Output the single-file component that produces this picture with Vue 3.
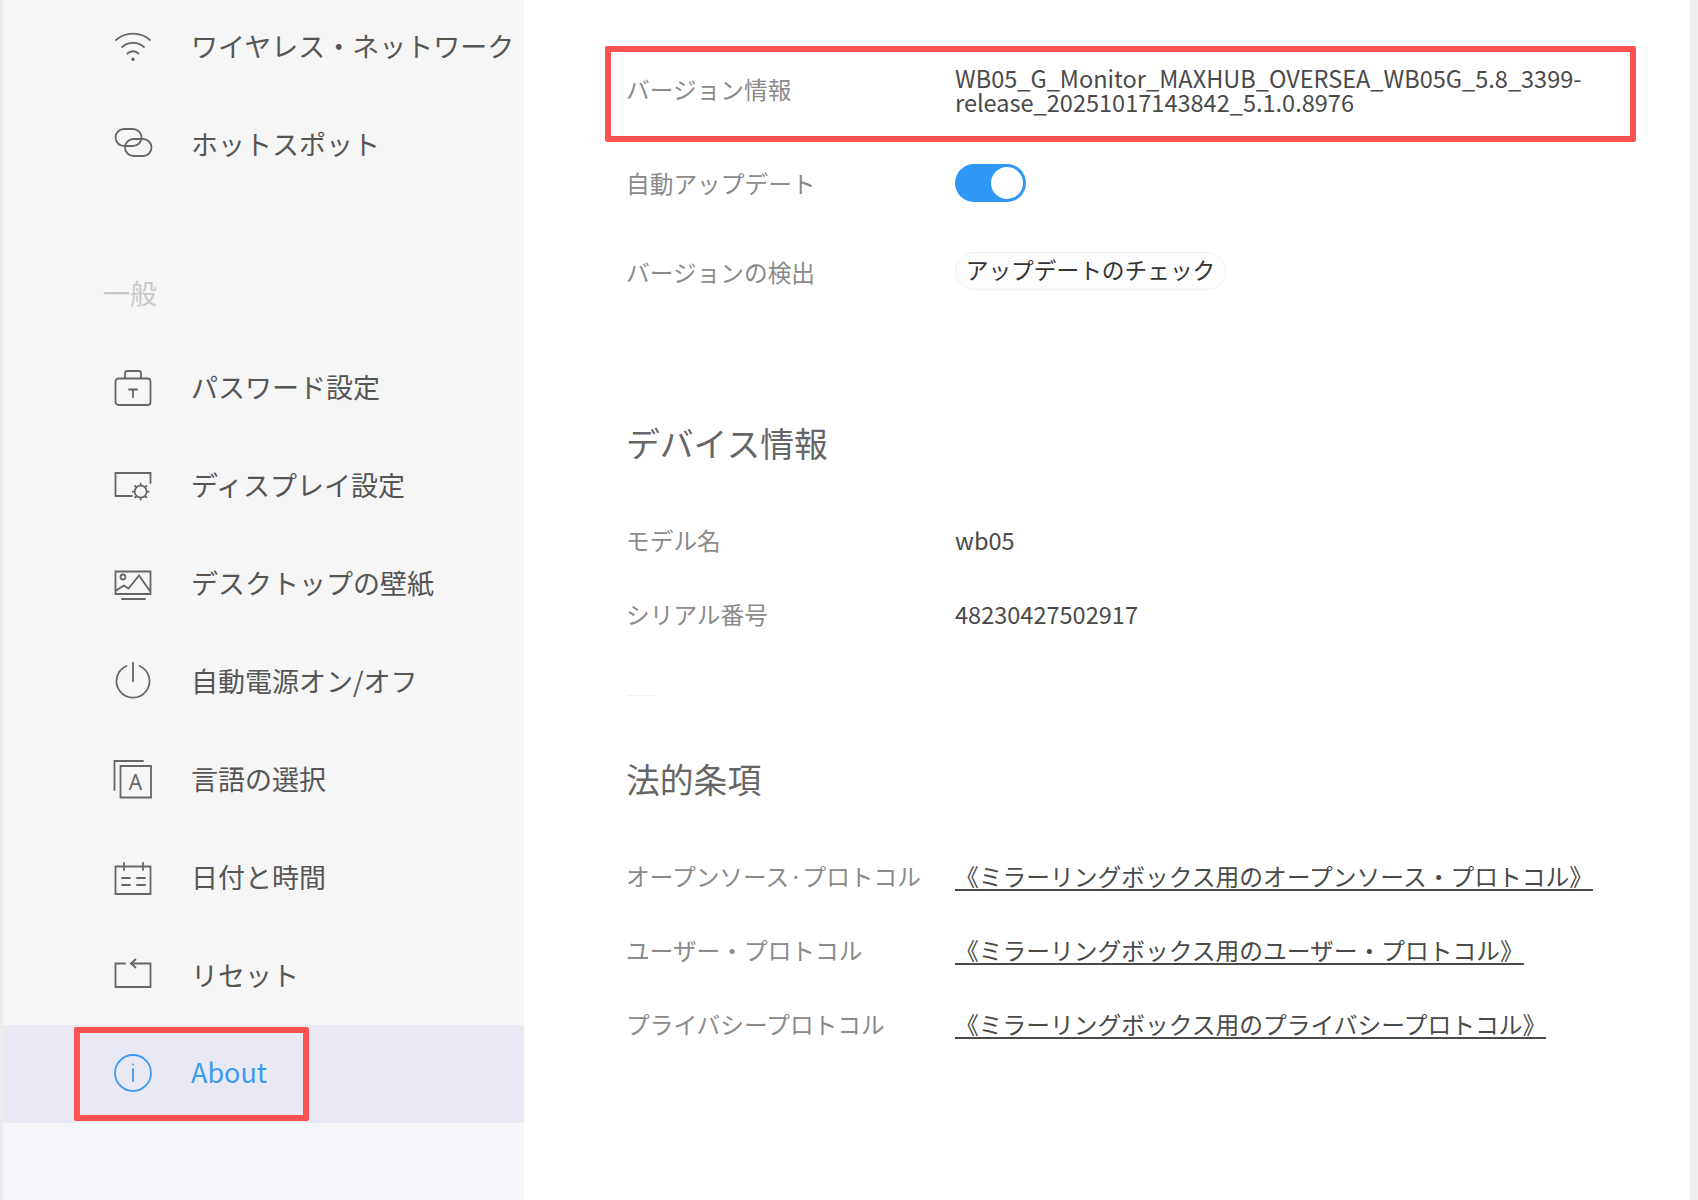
<script setup>
const wifi = { label: 'ワイヤレス・ネットワーク', d: 'M1 11C10 2.5 26 2.5 35 11M7 18C13 12.5 23 12.5 29 18M12.5 24.5C15.5 21.5 20.5 21.5 23.5 24.5M18 29.5a.8 .8 0 1 0 .01 0' }
const hotspot = { label: 'ホットスポット', d: 'M9 2H18A8.5 8.5 0 0 1 18 19H9A8.5 8.5 0 0 1 9 2ZM18.500 12H28A8.500 8.500 0 0 1 28 29H18.500A8.500 8.500 0 0 1 18.500 12Z' }
const general = [
  { label: 'パスワード設定', d: 'M3.500 8.500H32.500A3 3 0 0 1 35.500 11.500V32A3 3 0 0 1 32.500 35H3.500A3 3 0 0 1 .5 32V11.500A3 3 0 0 1 3.500 8.500ZM10 8.500V3A2 2 0 0 1 12 1H24A2 2 0 0 1 26 3V8.500M14 19.500H22M18 19.500V27' },
  { label: 'ディスプレイ設定', d: 'M35.500 15V5H.5V28H17M31.700 23.700A6 6 0 1 1 19.700 23.700A6 6 0 1 1 31.700 23.700ZM25.700 15.700V17.700M25.700 29.700V31.700M17.700 23.700H19.700M31.700 23.700H33.700M20 18L21.400 19.400M30 28L31.400 29.400M31.400 18L30 19.400M21.400 28L20 29.400' },
  { label: 'デスクトップの壁紙', d: 'M.5 5.500H35.500V28H.5ZM1 24.500L9 19.500L13.500 22.500L24 9.500L35 25M10.500 11A2.500 2.500 0 1 1 5.500 11A2.500 2.500 0 1 1 10.500 11ZM7 33H30' },
  { label: '自動電源オン/オフ', d: 'M11.500 2A16.500 16.500 0 1 0 24.500 2M18 -1V17' },
  { label: '言語の選択', text: 'A', d: 'M5.500 4H36V35.500H5.500ZM28 -1H-.5V28' },
  { label: '日付と時間', d: 'M.5 6.500H35.500V34H.5ZM9 3V10M28 3V10M7 18H15M22 18H30M7 25H15M22 25H30' },
  { label: 'リセット', d: 'M10 5.500H.5V29H35.500V5.500H16M20.500 1.500L16 5.500L20.500 9.500' }
]
const about = { label: 'About', d: 'M36 18A18 18 0 1 1 0 18A18 18 0 1 1 36 18ZM18 14V26M18 9.500h.01' }
const device = [
  { label: 'モデル名', value: 'wb05' },
  { label: 'シリアル番号', value: '48230427502917' }
]
const legal = [
  { label: 'オープンソース·プロトコル', link: '《ミラーリングボックス用のオープンソース・プロトコル》' },
  { label: 'ユーザー・プロトコル', link: '《ミラーリングボックス用のユーザー・プロトコル》' },
  { label: 'プライバシープロトコル', link: '《ミラーリングボックス用のプライバシープロトコル》' }
]
</script>

<template>
  <div class="page">
    <aside class="side">
      <div class="nav-row first">
        <svg class="ico" viewBox="0 0 36 36"><path :d="wifi.d" /></svg>
        <span>{{ wifi.label }}</span>
      </div>
      <div class="nav-row">
        <svg class="ico" viewBox="0 0 36 36"><path :d="hotspot.d" /></svg>
        <span>{{ hotspot.label }}</span>
      </div>
      <div class="group">一般</div>
      <div v-for="item in general" :key="item.label" class="nav-row">
        <svg class="ico" viewBox="0 0 36 36">
          <path :d="item.d" />
          <text v-if="item.text" x="20.500" y="28" class="ico-letter">{{ item.text }}</text>
        </svg>
        <span>{{ item.label }}</span>
      </div>
      <div class="nav-row active">
        <svg class="ico" viewBox="0 0 36 36"><path :d="about.d" /></svg>
        <span>{{ about.label }}</span>
        <i class="mark mark-about"></i>
      </div>
      <div class="tail"></div>
    </aside>

    <main class="main">
      <div class="row version">
        <div class="label">バージョン情報</div>
        <div class="value version-text">WB05_G_Monitor_MAXHUB_OVERSEA_WB05G_5.8_3399-<br />release_20251017143842_5.1.0.8976</div>
        <i class="mark mark-version"></i>
      </div>
      <div class="row auto">
        <div class="label">自動アップデート</div>
        <div class="toggle"><b></b></div>
      </div>
      <div class="row detect">
        <div class="label">バージョンの検出</div>
        <button class="check" type="button">アップデートのチェック</button>
      </div>

      <h2 class="title device">デバイス情報</h2>
      <div v-for="r in device" :key="r.label" class="row info info-device">
        <div class="label">{{ r.label }}</div>
        <div class="value">{{ r.value }}</div>
      </div>
      <div class="rule"></div>

      <h2 class="title legal">法的条項</h2>
      <div v-for="r in legal" :key="r.label" class="row info">
        <div class="label">{{ r.label }}</div>
        <a class="link">{{ r.link }}</a>
      </div>
    </main>
  </div>
</template>

<style>
html, body { margin: 0; background: #fff; }
</style>

<style scoped>
.page {
  display: flex;
  width: 1698px;
  height: 1200px;
  overflow: hidden;
  background: #fff;
  font-family: "Noto Sans CJK JP", "Noto Sans", sans-serif;
  font-weight: 400;
}
.side {
  width: 521px;
  flex: none;
  border-left: 3px solid #ececec;
  background: #f6f6f6;
  display: flex;
  flex-direction: column;
}
.nav-row {
  height: 98px;
  flex: none;
  display: flex;
  align-items: center;
  padding-left: 112px;
  color: #555;
  font-size: 27px;
  position: relative;
  white-space: nowrap;
}
.nav-row span { padding-bottom: 4px; }
.nav-row.first { margin-top: -2px; }
.nav-row.active {
  box-sizing: border-box;
  padding-bottom: 2px;
  background: #e8e9f3;
  color: #3a9bf0;
}
.ico {
  width: 36px;
  height: 36px;
  flex: none;
  margin-right: 40px;
  overflow: visible;
  fill: none;
  stroke: #666;
  stroke-width: 1.8;
  stroke-linecap: round;
}
.active .ico { stroke: #3a9bf0; }
.ico-letter {
  fill: #666;
  stroke: none;
  font-size: 21px;
  text-anchor: middle;
  font-family: "Noto Sans", sans-serif;
}
.group {
  height: 88px;
  margin-top: 57px;
  flex: none;
  box-sizing: border-box;
  padding: 22px 0 0 100px;
  color: #c9c9c9;
  font-size: 27px;
  line-height: 40px;
}
.tail { flex: 1; background: #f5f6f9; }

.main {
  flex: 1;
  box-sizing: border-box;
  padding: 46px 0 0 102px;
  border-right: 8px solid #eeeeee;
}
.row {
  display: flex;
  align-items: center;
  position: relative;
}
.label {
  width: 329px;
  flex: none;
  color: #8a8a8a;
  font-size: 23.700px;
  white-space: nowrap;
}
.value {
  color: #4a4a4a;
  font-size: 23.550px;
  white-space: nowrap;
}
.version { height: 96px; }
.version .label { padding-bottom: 10px; }
.version-text { line-height: 24px; padding-bottom: 9px; }
.auto { height: 84px; padding-bottom: 2px; box-sizing: border-box; }
.detect { height: 92px; }
.info-device { padding-bottom: 2px; box-sizing: border-box; }
.toggle {
  width: 71px;
  height: 38px;
  border-radius: 19px;
  background: #2f97f5;
  position: relative;
}
.toggle b {
  position: absolute;
  right: 3px;
  top: 3px;
  width: 32px;
  height: 32px;
  border-radius: 50%;
  background: #fff;
}
.check {
  height: 38px;
  width: 271px;
  margin: -2px 0 0 0;
  padding: 0 0 2px;
  border: 1px solid #f0f0f0;
  border-radius: 19px;
  background: #fdfdfd;
  color: #333;
  font: inherit;
  font-size: 22.700px;
  line-height: 1;
}
.title {
  margin: 0;
  height: 74px;
  line-height: 70px;
  color: #666;
  font-size: 33.800px;
  font-weight: 400;
}
.title.device { margin: 90px 0 22px; }
.title.legal { margin: 0 0 22px; line-height: 72px; }
.info { height: 74px; }
.rule {
  width: 28px;
  height: 1px;
  margin: 43px 0 47px 1px;
  background: #f2f2f2;
}
.link {
  padding-bottom: 2px;
  color: #4a4a4a;
  font-size: 23.750px;
  white-space: nowrap;
  text-decoration: underline;
  text-underline-offset: 3px;
}
.mark {
  position: absolute;
  box-sizing: border-box;
  border: 6px solid #ff5252;
  border-radius: 2px;
  pointer-events: none;
}
.mark-version {
  left: -21px;
  top: 0;
  width: 1031px;
  height: 96px;
}
.mark-about {
  left: 71px;
  top: 2px;
  width: 235px;
  height: 94px;
}
</style>
